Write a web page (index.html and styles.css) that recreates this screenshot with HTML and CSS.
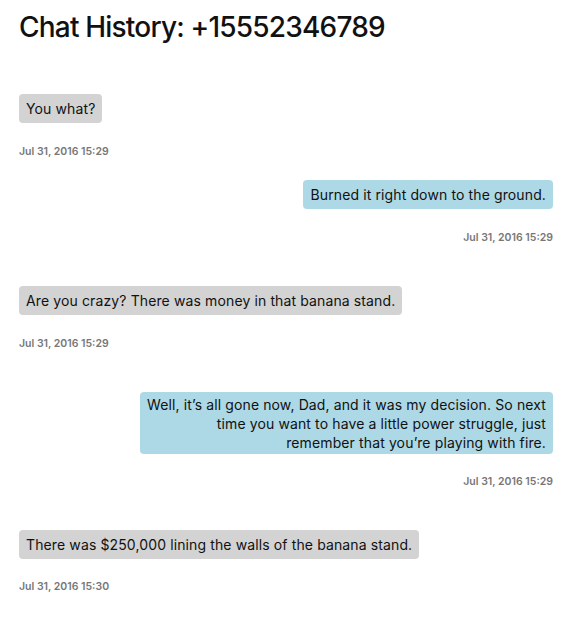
FILE: index.html
```html
<!DOCTYPE html>
<html>
<head>
<meta charset="utf-8">
<title>Chat History</title>
<link rel="stylesheet" href="styles.css">
</head>
<body>
<main class="page">
  <h1 class="title">Chat History: +15552346789</h1>
  <section class="thread">
    <div class="msg in first">
      <div class="bubble">You what?</div>
      <div class="time">Jul 31, 2016 15:29</div>
    </div>
    <div class="msg out">
      <div class="bubble">Burned it right down to the ground.</div>
      <div class="time">Jul 31, 2016 15:29</div>
    </div>
    <div class="msg in">
      <div class="bubble">Are you crazy? There was money in that banana stand.</div>
      <div class="time">Jul 31, 2016 15:29</div>
    </div>
    <div class="msg out multi-msg">
      <div class="bubble multi">Well, it’s all gone now, Dad, and it was my decision. So next<br>time you want to have a little power struggle, just<br>remember that you’re playing with fire.</div>
      <div class="time">Jul 31, 2016 15:29</div>
    </div>
    <div class="msg in last">
      <div class="bubble">There was $250,000 lining the walls of the banana stand.</div>
      <div class="time">Jul 31, 2016 15:30</div>
    </div>
  </section>
</main>
</body>
</html>
```
FILE: styles.css
```css
html, body {
  margin: 0;
  background: #fff;
}
.page {
  padding: 9px 23px 0 19px;
  font-family: Inter, "Noto Sans", sans-serif;
  color: #111;
}
.title {
  margin: 0 0 49px;
  font-size: 28px;
  line-height: 36px;
  font-weight: 500;
  letter-spacing: -0.8px;
  color: #111;
}
.thread {
  display: flex;
  flex-direction: column;
}
.msg {
  display: flex;
  flex-direction: column;
  margin-bottom: 42px;
}
.msg.first {
  margin-bottom: 22px;
}
.msg.in { align-items: flex-start; }
.msg.out { align-items: flex-end; }
.bubble {
  max-width: 75%;
  padding: 5px 7px;
  border-radius: 4px;
  font-size: 14px;
  line-height: 19px;
  letter-spacing: 0.12px;
  color: #111;
}
.bubble.multi {
  max-width: none;
  white-space: nowrap;
  padding: 3px 7px 2px;
}
.in .bubble { background: #d3d3d3; }
.out .bubble {
  background: #add8e6;
  text-align: right;
}
.time {
  margin-top: 22px;
  font-size: 10.5px;
  line-height: 13px;
  font-weight: 600;
  color: #777;
}
.multi-msg .time,
.last .time { margin-top: 21px; }
```
